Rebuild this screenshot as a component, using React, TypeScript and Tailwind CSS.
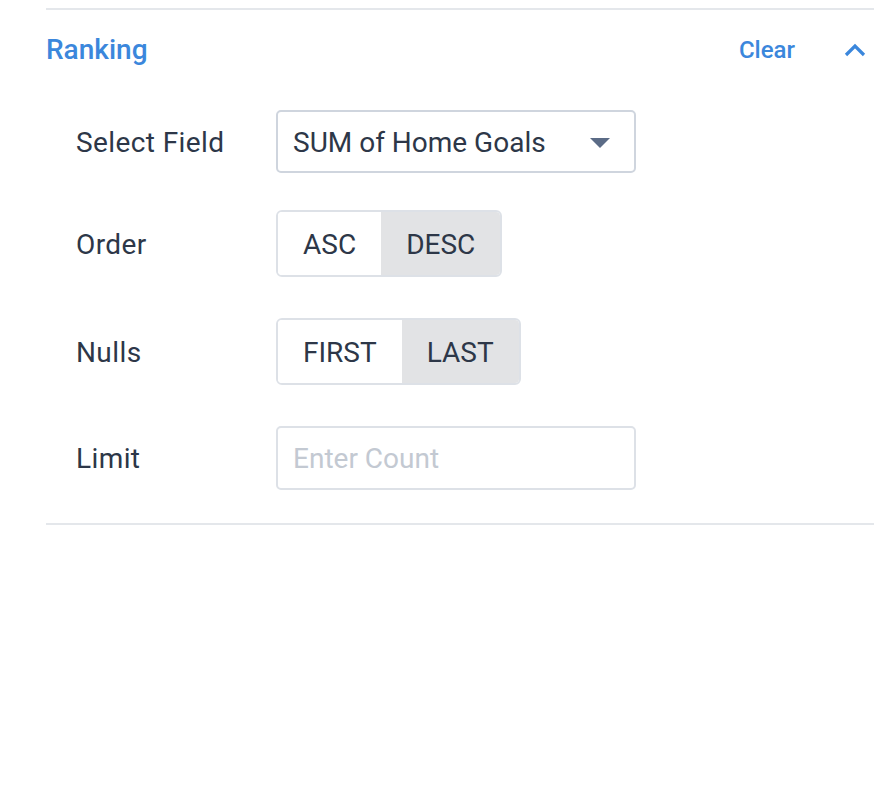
import { useState } from 'react';

type SegmentProps = {
  options: string[];
  value: string;
  onChange: (value: string) => void;
};

function Segment({ options, value, onChange }: SegmentProps) {
  return (
    <div className="flex h-[67px] overflow-hidden rounded-[6px] border-2 border-[#dde1e7]">
      {options.map((option) => (
        <button
          key={option}
          type="button"
          onClick={() => onChange(option)}
          className={
            option === value
              ? 'bg-[#e2e3e5] px-[25px] pt-[2px] text-[28px] text-[#2d3748]'
              : 'bg-white px-[25px] pt-[2px] text-[28px] text-[#2d3748]'
          }
        >
          {option}
        </button>
      ))}
    </div>
  );
}

function Row({ label, className, children }: { label: string; className?: string; children: React.ReactNode }) {
  return (
    <div className={'flex items-center ' + (className ?? '')}>
      <div className="w-[200px] shrink-0 pt-[2px] text-[28px] tracking-[0.4px] text-[#2d3748]">{label}</div>
      {children}
    </div>
  );
}

export default function App() {
  const [order, setOrder] = useState('DESC');
  const [nulls, setNulls] = useState('LAST');
  const [limit, setLimit] = useState('');

  return (
    <div className="min-h-[810px] bg-white pt-[8px] font-['Roboto',sans-serif]">
      <div className="ml-[46px] w-[828px] border-y-2 border-[#e4e7eb]">
        <div className="flex h-[80px] items-center justify-between">
          <span className="text-[28px] font-medium text-[#3b87dc]">Ranking</span>
          <div className="flex items-center">
            <button type="button" className="text-[24px] font-medium text-[#3b87dc]">
              Clear
            </button>
            <svg className="ml-[49px] mr-[8px]" width="22" height="14" viewBox="0 0 22 14" fill="none">
              <path d="M2 12 L11 3 L20 12" stroke="#3b87dc" strokeWidth="3.2" />
            </svg>
          </div>
        </div>
        <div className="flex flex-col pb-[33px] pl-[30px] pt-[20px]">
          <Row label="Select Field">
            <button
              type="button"
              className="flex h-[63px] w-[360px] items-center justify-between rounded-[5px] border-2 border-[#cfd5de] pl-[15px] pr-[24px] pt-[2px] text-[28px] text-[#2d3748]"
            >
              <span>SUM of Home Goals</span>
              <svg width="20" height="10" viewBox="0 0 20 10">
                <path d="M0 0 H20 L10 10 Z" fill="#5b6b86" />
              </svg>
            </button>
          </Row>
          <Row label="Order" className="mt-[37px]">
            <Segment options={['ASC', 'DESC']} value={order} onChange={setOrder} />
          </Row>
          <Row label="Nulls" className="mt-[41px]">
            <Segment options={['FIRST', 'LAST']} value={nulls} onChange={setNulls} />
          </Row>
          <Row label="Limit" className="mt-[41px]">
            <input
              value={limit}
              onChange={(event) => setLimit(event.target.value.replace(/[^\d]/g, ''))}
              placeholder="Enter Count"
              className="h-[64px] w-[360px] rounded-[5px] border-2 border-[#dde1e7] px-[15px] text-[28px] text-[#2d3748] outline-none placeholder:text-[#c3c9d2]"
            />
          </Row>
        </div>
      </div>
    </div>
  );
}
